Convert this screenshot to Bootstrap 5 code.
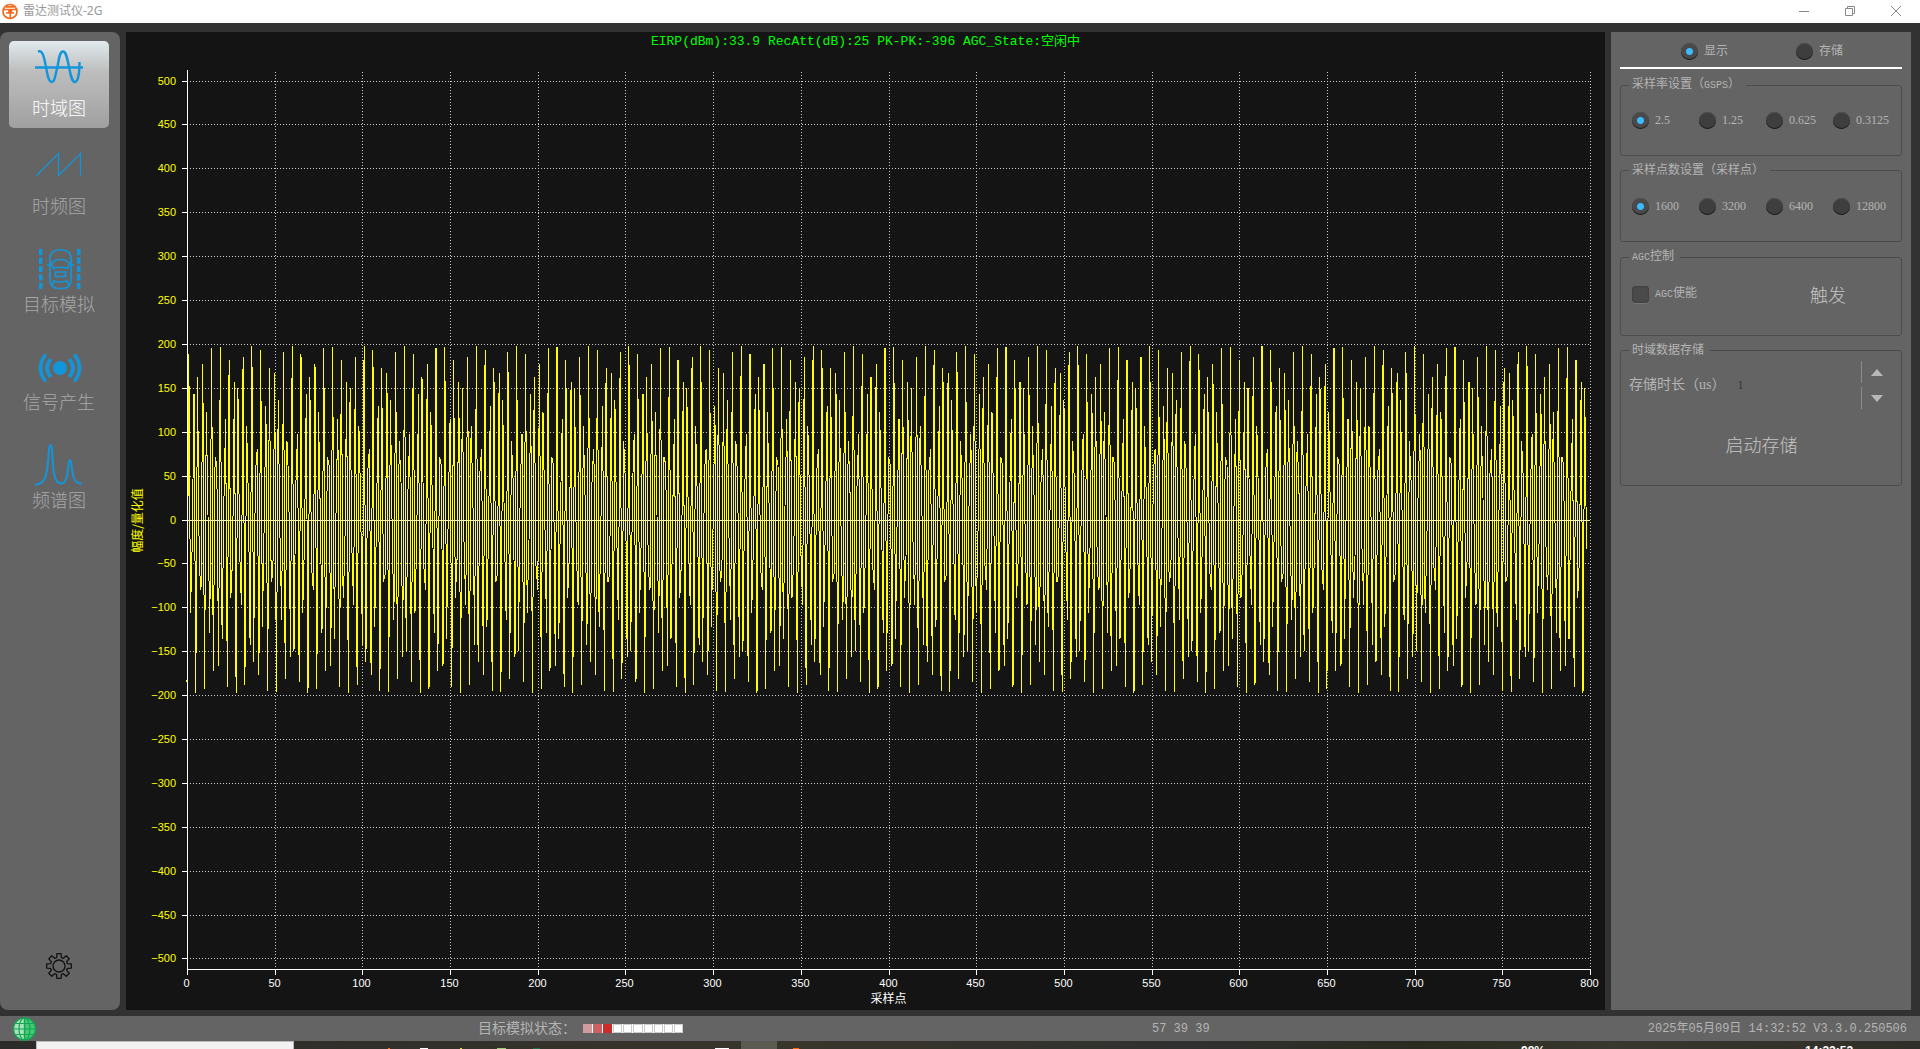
<!DOCTYPE html>
<html lang="zh-CN">
<head>
<meta charset="utf-8">
<meta name="viewport" content="width=device-width, initial-scale=1">
<title>雷达测试仪-2G</title>
<link href="https://cdn.jsdelivr.net/npm/bootstrap@5.3.0/dist/css/bootstrap.min.css" rel="stylesheet">
<style>
:root{--panel:#646464;--frame:#323232;--ink:#b4b4b4;--blue:#1296db}
body{background:var(--frame);color:var(--ink);font:12px/15px "Liberation Serif","Noto Sans CJK SC",sans-serif}
.mono{font-family:"Liberation Mono","Noto Sans CJK SC",monospace}
.titlebar{height:23px;background:#fff;color:#999;padding:0 18px 1px 2px}
.titlebar .app-name{font:12px/18px "Noto Sans","Noto Sans CJK SC",sans-serif}
.winbtns{gap:34px}
.winbtn{border:0;background:none;padding:0;width:12px;height:12px;display:flex}
.workspace{padding:9px 9px 6px 0;gap:6px;min-height:0}
.sidebar{width:120px;background:var(--panel);border-radius:8px;padding:9px 11px 28px 9px}
.navtiles{gap:11px}
.navtile{width:100px;height:87px;border:0;border-radius:5px;background:none;padding:6px 0 9px;color:#a8a8a8;font:18px/24px "Noto Sans CJK SC",sans-serif;font-weight:300;white-space:nowrap}
.navtile svg{display:block;margin:0 auto}
.navtile.active{background:linear-gradient(#e1eaee,#bdbdbd 35%,#a0a0a0);color:#fff}
.chartbox{background:#141414;min-width:0;position:relative}
.chart-title{color:#0f0;font-size:13px;line-height:20px;position:absolute;top:0;left:0;right:0;text-align:center}
#plot{display:block;width:100%;height:100%}
.sidepanel{width:300px;background:var(--panel);padding:0 9px}
.tabs-row{height:37px;border-bottom:2px solid #fff;margin-bottom:8px;padding:3px 0 0 61px}
.tabs-row .opt{width:115px;flex:none}
fieldset.grp{border:1px solid #4d4d4d;border-radius:3px;margin:0 0 7px;padding:0 10px 0 11px}
fieldset.grp legend{float:none;width:auto;font-size:12px;line-height:15px;margin:0 0 0 -3px;padding:0 6px 0 3px;color:var(--ink)}
.g-radio{height:79px;padding-bottom:7px!important}
.g-agc{height:87px}
.g-store{height:143px}
.latin{font-family:"Liberation Mono",monospace;font-size:10px}
.opt{display:flex;align-items:center;gap:6px;white-space:nowrap}
.knob{appearance:none;flex:none;width:17px;height:17px;margin:0;border-radius:50%;background:#3e3e3e;box-shadow:inset 0 -1px 0 #1c1c1c,inset 0 1px 0 #505050}
.knob:checked{background:radial-gradient(circle,#3cbcff 0 3px,#4a4a4a 4px)}
.tick{appearance:none;flex:none;width:17px;height:17px;margin:0;border-radius:4px;background:#4a4a4a;box-shadow:inset 0 0 2px #303030,0 1px 0 #757575}
.radios .opt{width:67px;flex:none}
.agc-row{padding:16px 45px 0 0}
.flatbtn{border:0;background:none;padding:0;color:#c4c4c4;font:18px/26px "Noto Sans CJK SC",sans-serif;font-weight:300}
.len-row{margin:0 0 0 -3px}
.len-label{font-size:14px;line-height:20px}
.len-box{width:100px;margin-left:12px;border:0;padding:0;background:none;color:#333;font-size:12px;line-height:20px;outline:0}
.spins{gap:4px;padding:3px 0}
.spin{border:0;border-left:1px solid #8a8a8a;background:none;height:22px;width:30px;padding:0;display:flex;align-items:center;justify-content:center}
.store-row{padding-top:19px;text-align:center}
.statusbar{height:25px;background:var(--panel);font-size:14px;line-height:20px;padding:0 13px}
.statusbar .mono{font-size:12px}
.status-label{margin-left:441px;white-space:nowrap}
.cells{height:9px;width:100px;background:#fff;gap:1px;margin-left:7px}
.cells i{flex:1 1 9px;min-width:0;background:#fff;border:1px solid #ccc}
.cells .s1{background:#d09b9e;border-color:#d09b9e}
.cells .s2{background:#cf6062;border-color:#cf6062}
.cells .s3{background:#cd2b2b;border-color:#cd2b2b}
.counts{margin-left:469px}
.taskstrip{height:8px;overflow:hidden;background:linear-gradient(90deg,#2b2b2a,#38352b 42%,#303130 62%,#2a2c20 74%,#38382e 84%,#302e28);padding-left:36px}
.taskstrip .find{width:258px;background:#f2f2f2;border:1px solid #bbb;border-bottom:0}
.taskstrip .icons{width:560px}
.taskstrip .tray{color:#fff;font:bold 12px/12px "Liberation Sans",sans-serif;padding-top:4px;width:399px}
.clock{margin-left:260px}
</style>
<script src="https://cdn.jsdelivr.net/npm/bootstrap@5.3.0/dist/js/bootstrap.bundle.min.js"></script>
</head>
<body class="d-flex flex-column vh-100 overflow-hidden">
<header class="titlebar d-flex align-items-center justify-content-between flex-shrink-0">
  <div class="d-flex align-items-center gap-1">
    <svg width="17" height="17" viewBox="0 0 17 17" fill="none" stroke="#f26b1d" stroke-width="1.7"><circle cx="8" cy="8.500" r="7"/><path d="M1 6.500H15M4 10H7V6.500M12 10H9.500V6.500M8.300 6.500V15M4 3.800H12"/></svg>
    <span class="app-name">雷达测试仪-2G</span>
  </div>
  <div class="winbtns d-flex">
    <button class="winbtn" aria-label="最小化"><svg width="12" height="12" stroke="#888"><path d="M1 6.500H11"/></svg></button>
    <button class="winbtn" aria-label="还原"><svg width="12" height="12" stroke="#888" fill="none"><path d="M1.500 3.500H8.500V10.500H1.500ZM3.500 3.500V1.500H10.500V8.500H8.500"/></svg></button>
    <button class="winbtn" aria-label="关闭"><svg width="12" height="12" stroke="#888"><path d="M1 1L11 11M11 1L1 11"/></svg></button>
  </div>
</header>

<main class="workspace d-flex flex-grow-1">
  <nav class="sidebar d-flex flex-column justify-content-between flex-shrink-0">
    <div class="navtiles d-flex flex-column">
      <button class="navtile active"><svg width="50" height="48" viewBox="0 0 50 48" fill="none" stroke="#1296db" stroke-width="2.4"><path d="M1 20.500H49"/><path d="M4 4.500C9 3 10 10 12 20C14 31 15 35 18 35C21 35 21 28 23.500 20C25 10 26 4.500 29 4.500C32 4.500 33 10 35 20C37 30 38 35 41 35C44 35 45.500 26 45.500 15"/></svg>时域图</button>
      <button class="navtile"><svg width="50" height="48" viewBox="0 0 50 48" fill="none" stroke="#1296db" stroke-width="1.300"><path d="M2.500 30.500L24.500 8.500V30.500L46.500 8.500V30.500"/></svg>时频图</button>
      <button class="navtile"><svg width="50" height="48" viewBox="0 0 50 48" fill="none" stroke="#1296db" stroke-width="1.700"><path d="M6.700 6V46M44.700 6V46" stroke-width="3.500" stroke-dasharray="6.200 2.250"/><rect x="16" y="7" width="21" height="38.500" rx="8"/><path d="M13 22H17M36 22H40M17.500 21Q20 16.500 26.500 16.500Q33 16.500 35.500 21L33.500 25.500Q26.500 23 19.500 25.500ZM21.500 29H31.500V33.500H21.500ZM18 42L20 38Q26.500 40 33 38L35 42"/></svg>目标模拟</button>
      <button class="navtile"><svg width="50" height="48" viewBox="0 0 50 48" fill="none" stroke="#1296db" stroke-width="3.600"><circle cx="26" cy="27" r="7" fill="#1296db" stroke="none"/><path d="M16.700 18Q9.500 27 16.700 36M35.300 18Q42.500 27 35.300 36M11.500 13.500Q1.500 27 11.500 40.500M40.500 13.500Q50.500 27 40.500 40.500"/></svg>信号产生</button>
      <button class="navtile"><svg width="50" height="48" viewBox="0 0 50 48" fill="none" stroke="#1296db" stroke-width="2" stroke-linecap="round"><path d="M2 45.500C14 45.500 13.500 28 15 10Q16.500 2 18 10C19 30 19.500 44.500 27 44.500C33.500 44.500 33.500 33 34.700 24Q36 18 37.300 24C38.500 36 39.500 44.500 47 44.500"/></svg>频谱图</button>
    </div>
    <button class="border-0 bg-transparent p-0 align-self-center" aria-label="设置">
      <svg class="d-block" width="28" height="32" viewBox="-14 -14 28 28" fill="none" stroke="#111" stroke-width="1.300" stroke-linejoin="round"><circle r="6"/><path id="gear"/></svg>
    </button>
  </nav>

  <section class="chartbox flex-grow-1">
    <svg id="plot"></svg>
    <div class="chart-title mono">EIRP(dBm):33.9 RecAtt(dB):25 PK-PK:-396 AGC_State:空闲中</div>
  </section>

  <aside class="sidepanel flex-shrink-0">
    <div class="tabs-row d-flex align-items-center">
      <label class="opt"><input class="knob" type="radio" name="view" checked>显示</label>
      <label class="opt"><input class="knob" type="radio" name="view">存储</label>
    </div>
    <fieldset class="grp g-radio">
      <legend>采样率设置（<span class="latin">GSPS</span>）</legend>
      <div class="radios d-flex h-100 align-items-center">
        <label class="opt"><input class="knob" type="radio" name="rate" checked>2.5</label>
        <label class="opt"><input class="knob" type="radio" name="rate">1.25</label>
        <label class="opt"><input class="knob" type="radio" name="rate">0.625</label>
        <label class="opt"><input class="knob" type="radio" name="rate">0.3125</label>
      </div>
    </fieldset>
    <fieldset class="grp g-radio">
      <legend>采样点数设置（采样点）</legend>
      <div class="radios d-flex h-100 align-items-center">
        <label class="opt"><input class="knob" type="radio" name="pts" checked>1600</label>
        <label class="opt"><input class="knob" type="radio" name="pts">3200</label>
        <label class="opt"><input class="knob" type="radio" name="pts">6400</label>
        <label class="opt"><input class="knob" type="radio" name="pts">12800</label>
      </div>
    </fieldset>
    <fieldset class="grp g-agc">
      <legend><span class="latin">AGC</span>控制</legend>
      <div class="agc-row d-flex align-items-center justify-content-between">
        <label class="opt"><input class="tick" type="checkbox"><span><span class="latin">AGC</span>使能</span></label>
        <button class="flatbtn">触发</button>
      </div>
    </fieldset>
    <fieldset class="grp g-store">
      <legend>时域数据存储</legend>
      <div class="len-row d-flex align-items-center">
        <label class="len-label" for="len">存储时长（us）</label>
        <input class="len-box flex-grow-1" id="len" type="text" value="1">
        <div class="spins d-flex flex-column">
          <button class="spin" aria-label="增加"><svg width="12" height="7"><path d="M6 0L12 7H0Z" fill="#b8b8b8"/></svg></button>
          <button class="spin" aria-label="减少"><svg width="12" height="7"><path d="M6 7L12 0H0Z" fill="#b8b8b8"/></svg></button>
        </div>
      </div>
      <div class="store-row"><button class="flatbtn">启动存储</button></div>
    </fieldset>
  </aside>
</main>

<footer class="statusbar d-flex align-items-center flex-shrink-0">
  <svg width="24" height="24" viewBox="0 0 24 24" fill="none" stroke="#12a650" stroke-width="1.200"><circle cx="11.500" cy="12" r="11" fill="#a9e2bd"/><path d="M11.500 1A11 11 0 0 1 11.500 23Z" fill="#45c878"/><ellipse cx="11.500" cy="12" rx="5.500" ry="11"/><path d="M11.500 1V23M.500 12H22.500M2.500 6.500H20.500M2.500 17.500H20.500"/></svg>
  <span class="status-label">目标模拟状态：</span>
  <div class="cells d-flex"><i class="s1"></i><i class="s2"></i><i class="s3"></i><i></i><i></i><i></i><i></i><i></i><i></i><i></i></div>
  <span class="mono counts">57 39 39</span>
  <span class="mono ms-auto">2025年05月09日 14:32:52 V3.3.0.250506</span>
</footer>
<div class="taskstrip d-flex justify-content-between flex-shrink-0">
  <div class="find"></div>
  <svg class="icons me-auto" height="8"><path d="M447 0H483V8H447Z" fill="#5c5b52"/><path d="M421 7H435V8H421ZM126 7H134V8H126Z" fill="#fff"/><path d="M499 7H505V8H499ZM94 7H96V8H94Z" fill="#f60"/><path d="M166 7H168V8H166Z" fill="#dd3"/><path d="M203 7H212V8H203Z" fill="#9c7"/><path d="M239 7H246V8H239Z" fill="#176b49"/></svg>
  <div class="tray d-flex"><span class="cpu">98%</span><span class="clock">14:32:52</span></div>
</div>
<script>
(function(){
  // gear outline with eight teeth
  var d='',n=8;
  for(var i=0;i<n;i++){
    var a=i*2*Math.PI/n;
    [[-.27,8.800],[-.17,12.500],[.17,12.500],[.27,8.800]].forEach(function(p,k){
      d+=(i||k?'L':'M')+(p[1]*Math.sin(a+p[0])).toFixed(2)+' '+(-p[1]*Math.cos(a+p[0])).toFixed(2);
    });
  }
  document.getElementById('gear').setAttribute('d',d+'Z');

  var svg=document.getElementById('plot');
  function draw(){
    var W=svg.clientWidth,H=svg.clientHeight,L=61,R=W-15,T=38,B=H-41;
    var X=function(v){return L+v/800*(R-L)},Y=function(v){return T+(512-v)/1024*(B-T)};
    var grid='',tick='',txt='';
    for(var v=-500;v<=500;v+=50){
      var y=Math.round(Y(v))+.5;
      if(v)grid+='M'+L+' '+y+'H'+R;
      tick+='M'+(L-5)+' '+y+'H'+L;
      txt+='<text x="'+(L-11)+'" y="'+(y+3.500)+'" text-anchor="end" fill="#ff0">'+String(v).replace('-','−')+'</text>';
    }
    for(v=0;v<=800;v+=50){
      var x=Math.round(X(v))+.5;
      if(v)grid+='M'+x+' '+(T+2)+'V'+B;
      tick+='M'+x+' '+B+'v6';
      txt+='<text x="'+(x-1)+'" y="'+(B+18)+'" text-anchor="middle" fill="#fff">'+v+'</text>';
    }
    // sampled tone: 25/64 cycles per sample
    var pts='';
    for(var i=0;i<799;i++)pts+=X(i).toFixed(1)+','+Y(198*Math.cos(2*Math.PI*(.5587+i*25/64))).toFixed(1)+' ';
    var mid=(L+R)/2,cy=Math.round(Y(0))+.5;
    svg.innerHTML='<g fill="none" shape-rendering="crispEdges"><path d="'+grid+'" stroke="#ccc" stroke-dasharray="1 2"/>'+
      '<polyline points="'+pts+'" stroke="#ff0"/>'+
      '<path d="M'+L+' '+cy+'H'+R+'" stroke="#f4f4b0"/>'+
      '<path d="M'+(L+.5)+' '+T+'V'+(B+.5)+'H'+R+tick+'" stroke="#fff"/></g>'+
      '<g font-family="Liberation Sans" font-size="11">'+txt+'</g>'+
      '<g font-family="Noto Sans CJK SC, sans-serif" font-size="12"><text x="'+mid+'" y="'+(B+34)+'" text-anchor="middle" fill="#fff">采样点</text>'+
      '<text transform="translate(16 '+cy+') rotate(-90)" text-anchor="middle" fill="#ff0">幅度/量化值</text></g>';
  }
  draw();
  addEventListener('resize',draw);
})();
</script>
</body>
</html>
